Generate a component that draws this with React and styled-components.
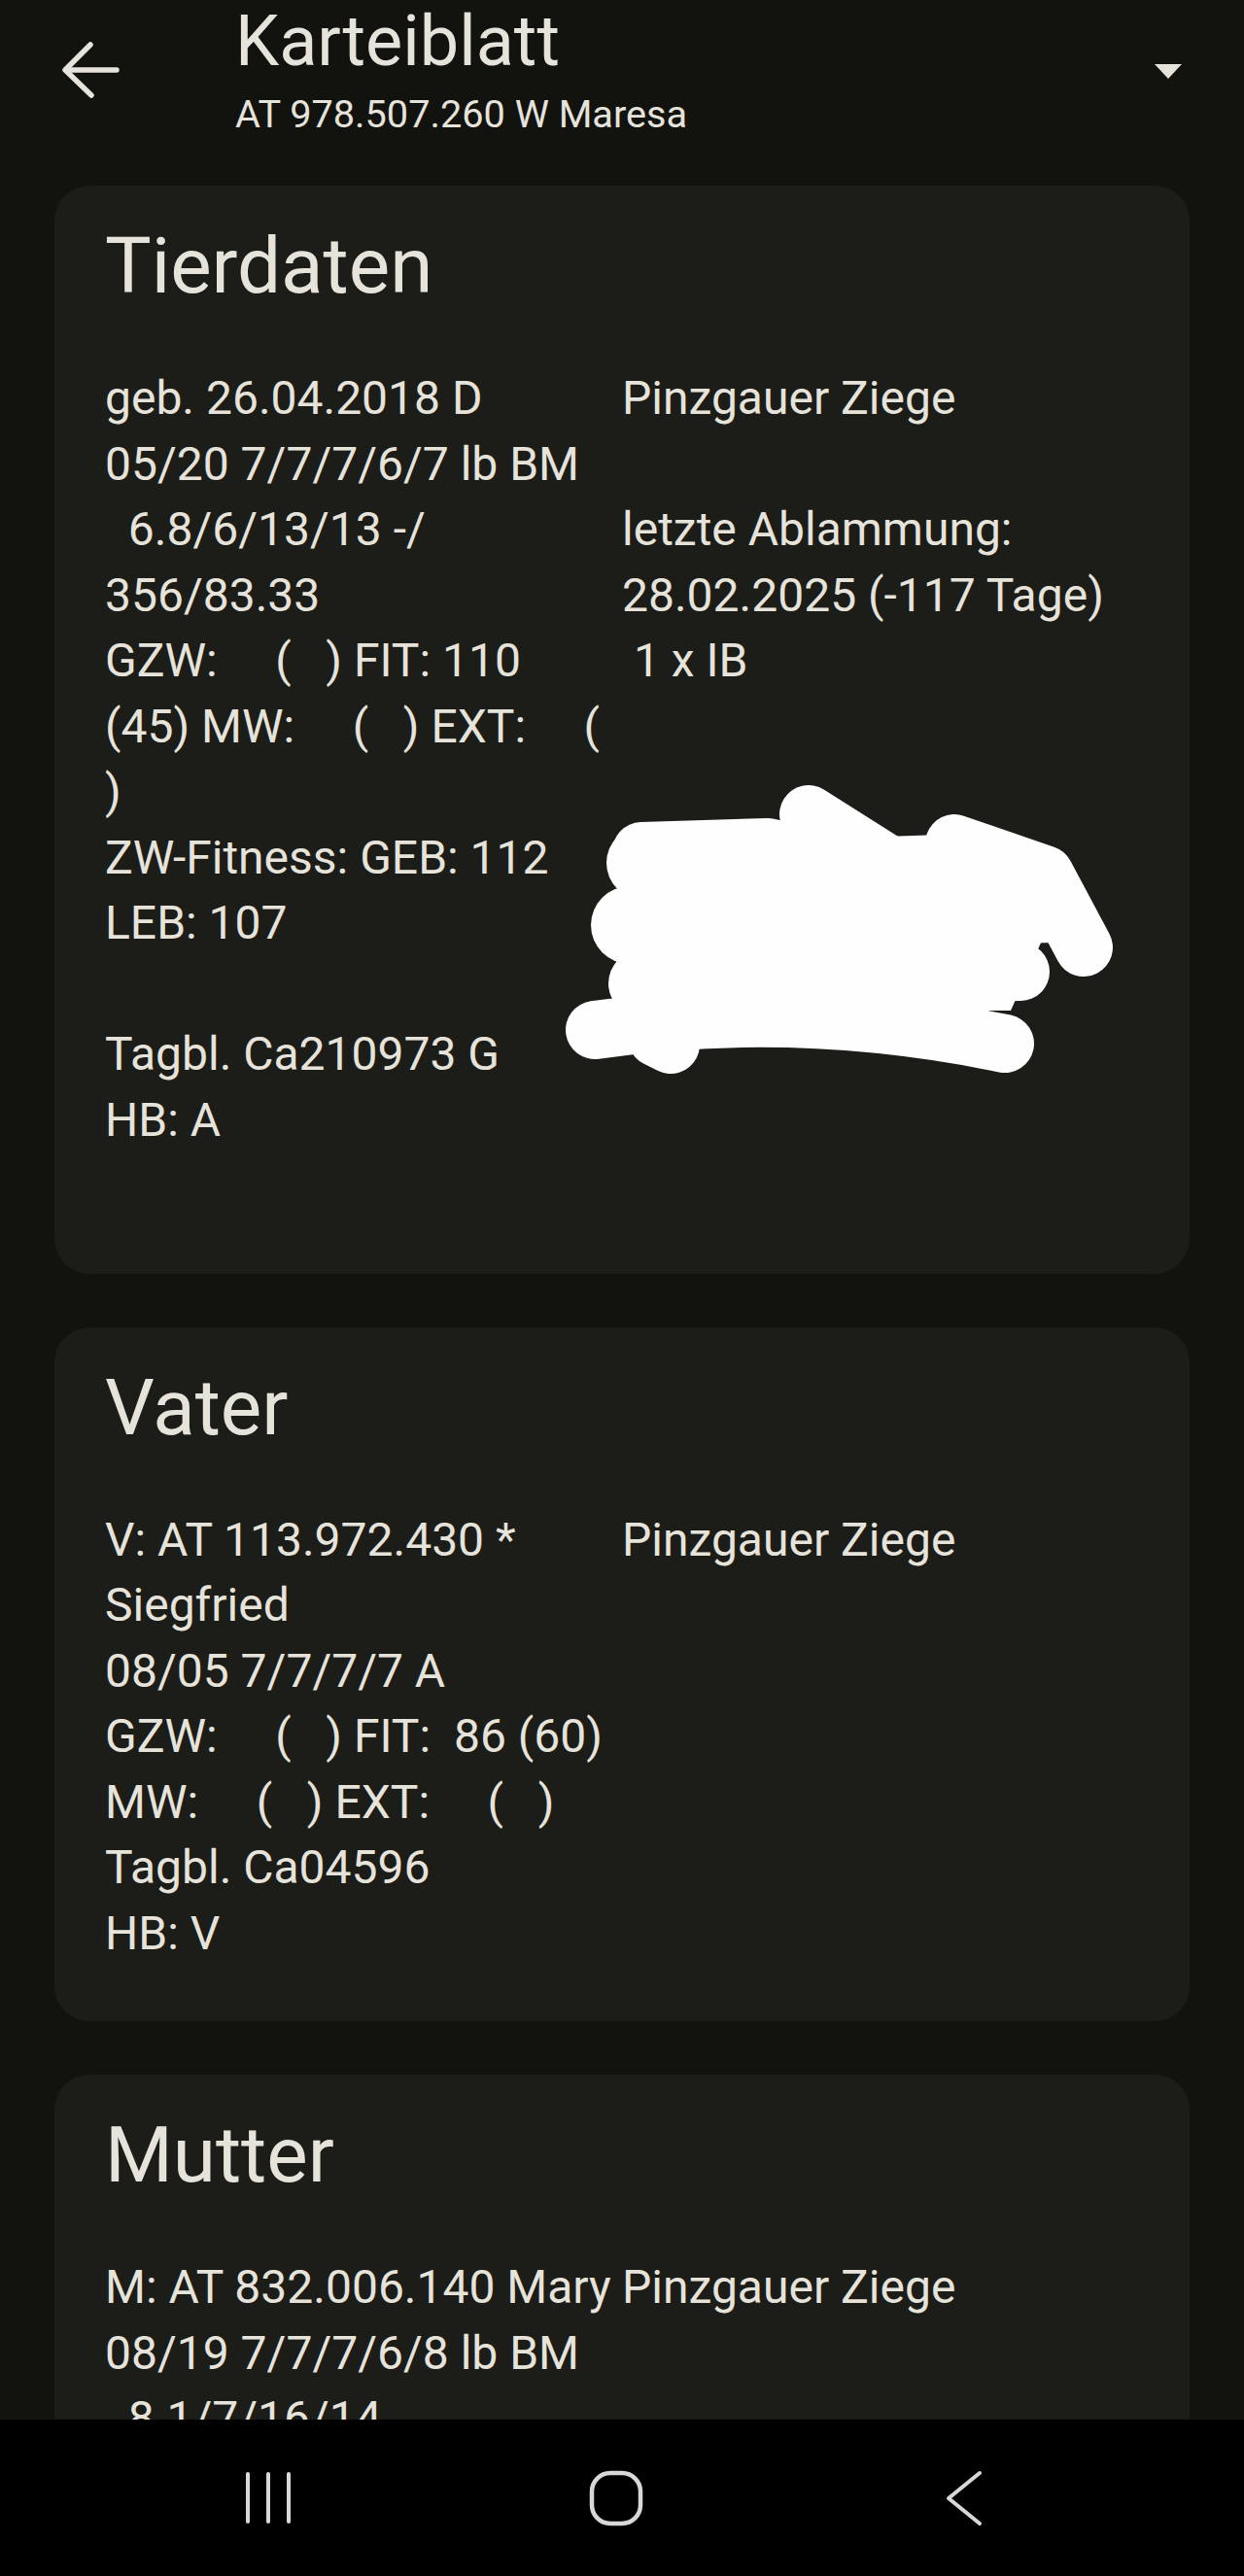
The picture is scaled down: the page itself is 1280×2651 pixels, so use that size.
import React from "react";
import styled, { createGlobalStyle } from "styled-components";

// Karteiblatt – Tierdaten / Vater / Mutter

const GlobalStyle = createGlobalStyle`
  html, body {
    margin: 0;
    padding: 0;
    background: #12120e;
  }
  * {
    box-sizing: border-box;
  }
`;

const Screen = styled.div`
  width: 1280px;
  height: 2651px;
  display: flex;
  flex-direction: column;
  overflow: hidden;
  background: #12120e;
  color: #e6e3db;
  font-family: Roboto, "Noto Sans", sans-serif;
`;

const TopBar = styled.header`
  height: 160px;
  flex-shrink: 0;
  display: flex;
  align-items: flex-start;
  padding: 1px 38px 0 54px;
`;

const IconButton = styled.div`
  width: 80px;
  height: 80px;
  flex-shrink: 0;
  display: flex;
  align-items: center;
  justify-content: center;
  margin-top: ${(p) => p.$top}px;
`;

const TitleBlock = styled.div`
  flex: 1;
  display: flex;
  flex-direction: column;
  margin-left: 108px;
`;

const Title = styled.h1`
  margin: 0;
  font-size: 72px;
  line-height: 84px;
  font-weight: 400;
`;

const Subtitle = styled.div`
  margin-top: 10px;
  font-size: 39.7px;
  line-height: 46px;
`;

const Content = styled.main`
  flex: 1;
  min-height: 0;
  overflow: hidden;
  display: flex;
  flex-direction: column;
  gap: 55px;
  padding: 31px 56px 0;
`;

const Card = styled.section`
  position: relative;
  flex-shrink: 0;
  background: #1c1c18;
  border-radius: 36px;
  padding: 35px 52px 57px;
`;

const CardTitle = styled.h2`
  margin: 0;
  font-size: 80px;
  line-height: 96px;
  font-weight: 400;
`;

const Columns = styled.div`
  margin-top: 54px;
  display: grid;
  grid-template-columns: 1fr 1fr;
`;

const Column = styled.div`
  display: flex;
  flex-direction: column;
`;

const Line = styled.div`
  height: 67.5px;
  font-size: 48px;
  line-height: 67.5px;
  white-space: pre;
`;

const Redaction = styled.svg`
  position: absolute;
  left: 522px;
  top: 615px;
`;

const NavBar = styled.nav`
  height: 161px;
  flex-shrink: 0;
  background: #000;
  display: flex;
  align-items: center;
  justify-content: center;
  gap: 278px;
  padding-right: 12px;
`;

const NavButton = styled.div`
  width: 80px;
  height: 80px;
  display: flex;
  align-items: center;
  justify-content: center;
`;

const BackArrow = () => (
  <svg width="80" height="80" viewBox="0 0 80 80" fill="none" stroke="#e6e3db" strokeWidth="5.5" strokeLinecap="round" strokeLinejoin="round">
    <path d="M66 40H14" />
    <path d="M39 14L13 40L40 66" />
  </svg>
);

const DropDown = () => (
  <svg width="80" height="80" viewBox="0 0 80 80">
    <path d="M26 33H54L40 48Z" fill="#e6e3db" />
  </svg>
);

const RecentsIcon = () => (
  <svg width="60" height="60" viewBox="0 0 60 60" stroke="#d8d8d8" strokeWidth="4" strokeLinecap="round">
    <path d="M9 5V54M30 5V54M51 5V54" />
  </svg>
);

const HomeIcon = () => (
  <svg width="60" height="60" viewBox="0 0 60 60" fill="none" stroke="#d8d8d8" strokeWidth="4.5">
    <rect x="5" y="4" width="50" height="52" rx="19" />
  </svg>
);

const NavBackIcon = () => (
  <svg width="60" height="60" viewBox="0 0 60 60" fill="none" stroke="#d8d8d8" strokeWidth="4" strokeLinecap="round" strokeLinejoin="round">
    <path d="M46 4L14 30L46 56" />
  </svg>
);

// white marker scribble that hides part of the data
const Scribble = () => (
  <Redaction width="580" height="300" viewBox="578 806 580 300">
    <g fill="#fefefe">
      <circle cx="662" cy="888" r="38" />
      <circle cx="648" cy="952" r="40" />
      <circle cx="660" cy="1012" r="34" />
    </g>
    <g fill="none" stroke="#fefefe" strokeWidth="60" strokeLinecap="round" strokeLinejoin="round">
      <path d="M660 876L790 872L880 892L1000 888" />
      <path d="M832 838L930 900" />
      <path d="M982 868L1075 900L1115 975" />
      <path d="M650 948L1090 940" />
      <path d="M660 1005L1050 1000" />
      <path d="M612 1060Q820 1030 1034 1074" />
      <path d="M676 1068L690 1075" />
    </g>
    <path d="M650 880L1000 870L1080 950L1040 1040L650 1040Z" fill="#fefefe" />
  </Redaction>
);

const cards = [
  {
    title: "Tierdaten",
    left: [
      "geb. 26.04.2018 D",
      "05/20 7/7/7/6/7 lb BM",
      "  6.8/6/13/13 -/",
      "356/83.33",
      "GZW:     (   ) FIT: 110",
      "(45) MW:     (   ) EXT:     (",
      ")",
      "ZW-Fitness: GEB: 112",
      "LEB: 107",
      "",
      "Tagbl. Ca210973 G",
      "HB: A",
    ],
    right: [
      "Pinzgauer Ziege",
      "",
      "letzte Ablammung:",
      "28.02.2025 (-117 Tage)",
      " 1 x IB",
      "",
      "",
      "",
      "",
      "",
      "",
      "",
      "",
    ],
    redacted: true,
  },
  {
    title: "Vater",
    left: [
      "V: AT 113.972.430 *",
      "Siegfried",
      "08/05 7/7/7/7 A",
      "GZW:     (   ) FIT:  86 (60)",
      "MW:     (   ) EXT:     (   )",
      "Tagbl. Ca04596",
      "HB: V",
    ],
    right: ["Pinzgauer Ziege"],
  },
  {
    title: "Mutter",
    left: ["M: AT 832.006.140 Mary", "08/19 7/7/7/6/8 lb BM", "  8.1/7/16/14"],
    right: ["Pinzgauer Ziege"],
  },
];

function InfoCard({ title, left, right, redacted }) {
  return (
    <Card>
      <CardTitle>{title}</CardTitle>
      <Columns>
        <Column>
          {left.map((t, i) => (
            <Line key={i}>{t || " "}</Line>
          ))}
        </Column>
        <Column>
          {right.map((t, i) => (
            <Line key={i}>{t || " "}</Line>
          ))}
        </Column>
      </Columns>
      {redacted && <Scribble />}
    </Card>
  );
}

export default function App() {
  return (
    <>
      <GlobalStyle />
      <Screen>
        <TopBar>
          <IconButton $top={31}>
            <BackArrow />
          </IconButton>
          <TitleBlock>
            <Title>Karteiblatt</Title>
            <Subtitle>AT 978.507.260 W Maresa</Subtitle>
          </TitleBlock>
          <IconButton $top={32}>
            <DropDown />
          </IconButton>
        </TopBar>
        <Content>
          {cards.map((c) => (
            <InfoCard key={c.title} {...c} />
          ))}
        </Content>
        <NavBar>
          <NavButton>
            <RecentsIcon />
          </NavButton>
          <NavButton>
            <HomeIcon />
          </NavButton>
          <NavButton>
            <NavBackIcon />
          </NavButton>
        </NavBar>
      </Screen>
    </>
  );
}
